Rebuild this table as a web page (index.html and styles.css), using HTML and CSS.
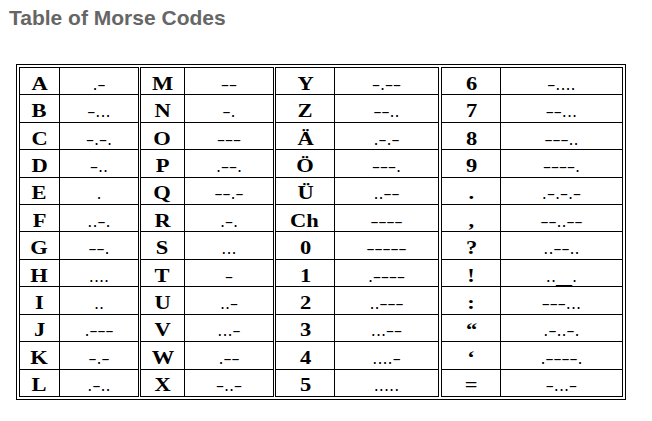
FILE: index.html
```html
<!DOCTYPE html>
<html>
<head>
<meta charset="utf-8">
<link rel="stylesheet" href="styles.css">
</head>
<body>
<h1 class="title">Table of Morse Codes</h1>
<div class="frame">
  <div class="group g1">
    <div class="k"><span>A</span></div><div class="c">.–</div>
    <div class="k"><span>B</span></div><div class="c">–...</div>
    <div class="k"><span>C</span></div><div class="c">–.–.</div>
    <div class="k"><span>D</span></div><div class="c">–..</div>
    <div class="k"><span>E</span></div><div class="c">.</div>
    <div class="k"><span>F</span></div><div class="c">..–.</div>
    <div class="k"><span>G</span></div><div class="c">––.</div>
    <div class="k"><span>H</span></div><div class="c">....</div>
    <div class="k"><span>I</span></div><div class="c">..</div>
    <div class="k"><span>J</span></div><div class="c">.–––</div>
    <div class="k"><span>K</span></div><div class="c">–.–</div>
    <div class="k"><span>L</span></div><div class="c">.–..</div>
  </div>
  <div class="group g2">
    <div class="k"><span>M</span></div><div class="c">––</div>
    <div class="k"><span>N</span></div><div class="c">–.</div>
    <div class="k"><span>O</span></div><div class="c">–––</div>
    <div class="k"><span>P</span></div><div class="c">.––.</div>
    <div class="k"><span>Q</span></div><div class="c">––.–</div>
    <div class="k"><span>R</span></div><div class="c">.–.</div>
    <div class="k"><span>S</span></div><div class="c">...</div>
    <div class="k"><span>T</span></div><div class="c">–</div>
    <div class="k"><span>U</span></div><div class="c">..–</div>
    <div class="k"><span>V</span></div><div class="c">...–</div>
    <div class="k"><span>W</span></div><div class="c">.––</div>
    <div class="k"><span>X</span></div><div class="c">–..–</div>
  </div>
  <div class="group g3">
    <div class="k"><span>Y</span></div><div class="c">–.––</div>
    <div class="k"><span>Z</span></div><div class="c">––..</div>
    <div class="k"><span>Ä</span></div><div class="c">.–.–</div>
    <div class="k"><span>Ö</span></div><div class="c">–––.</div>
    <div class="k"><span>Ü</span></div><div class="c">..––</div>
    <div class="k"><span>Ch</span></div><div class="c">––––</div>
    <div class="k"><span>0</span></div><div class="c">–––––</div>
    <div class="k"><span>1</span></div><div class="c">.––––</div>
    <div class="k"><span>2</span></div><div class="c">..–––</div>
    <div class="k"><span>3</span></div><div class="c">...––</div>
    <div class="k"><span>4</span></div><div class="c">....–</div>
    <div class="k"><span>5</span></div><div class="c">.....</div>
  </div>
  <div class="group g4">
    <div class="k"><span>6</span></div><div class="c">–....</div>
    <div class="k"><span>7</span></div><div class="c">––...</div>
    <div class="k"><span>8</span></div><div class="c">–––..</div>
    <div class="k"><span>9</span></div><div class="c">––––.</div>
    <div class="k"><span>.</span></div><div class="c">.–.–.–</div>
    <div class="k"><span>,</span></div><div class="c">––..––</div>
    <div class="k"><span>?</span></div><div class="c">..––..</div>
    <div class="k"><span>!</span></div><div class="c">..__.</div>
    <div class="k"><span>:</span></div><div class="c">–––...</div>
    <div class="k"><span>“</span></div><div class="c">.–..–.</div>
    <div class="k"><span>‘</span></div><div class="c">.––––.</div>
    <div class="k"><span>=</span></div><div class="c">–...–</div>
  </div>
</div>
</body>
</html>
```
FILE: styles.css
```css
html, body {
  margin: 0;
  padding: 0;
  background: #fff;
}
body {
  padding-top: 6px;
}
.title {
  margin: 0 0 35px 9px;
  font-family: "Liberation Sans", Arial, sans-serif;
  font-weight: bold;
  font-size: 21px;
  line-height: 23px;
  color: #666;
}
.frame {
  display: flex;
  width: max-content;
  margin-left: 16px;
  border: 1px solid #000;
  padding: 2px;
}
.group {
  display: grid;
  grid-template-rows: repeat(12, 1fr);
  gap: 1px;
  height: 330px;
  box-sizing: border-box;
  border: 1px solid #000;
  background: #000;
}
.g1 { grid-template-columns: 39px 78px; }
.g2 { grid-template-columns: 43px 88px; margin-left: 1px; }
.g3 { grid-template-columns: 58px 103px; margin-left: 1px; }
.g4 { grid-template-columns: 58px 121px; margin-left: 2px; }
.k, .c {
  background: #fff;
  display: flex;
  align-items: center;
  justify-content: center;
  color: #000;
  box-sizing: border-box;
}
.k {
  font-family: "Liberation Serif", "Times New Roman", serif;
  font-weight: bold;
  font-size: 18px;
  line-height: 20px;
  padding-top: 5px;
}
.k span {
  display: inline-block;
  transform: scaleX(1.25);
}
.c {
  font-family: "DejaVu Sans", Verdana, sans-serif;
  font-size: 16px;
  line-height: 16px;
  padding-top: 7px;
}
```
